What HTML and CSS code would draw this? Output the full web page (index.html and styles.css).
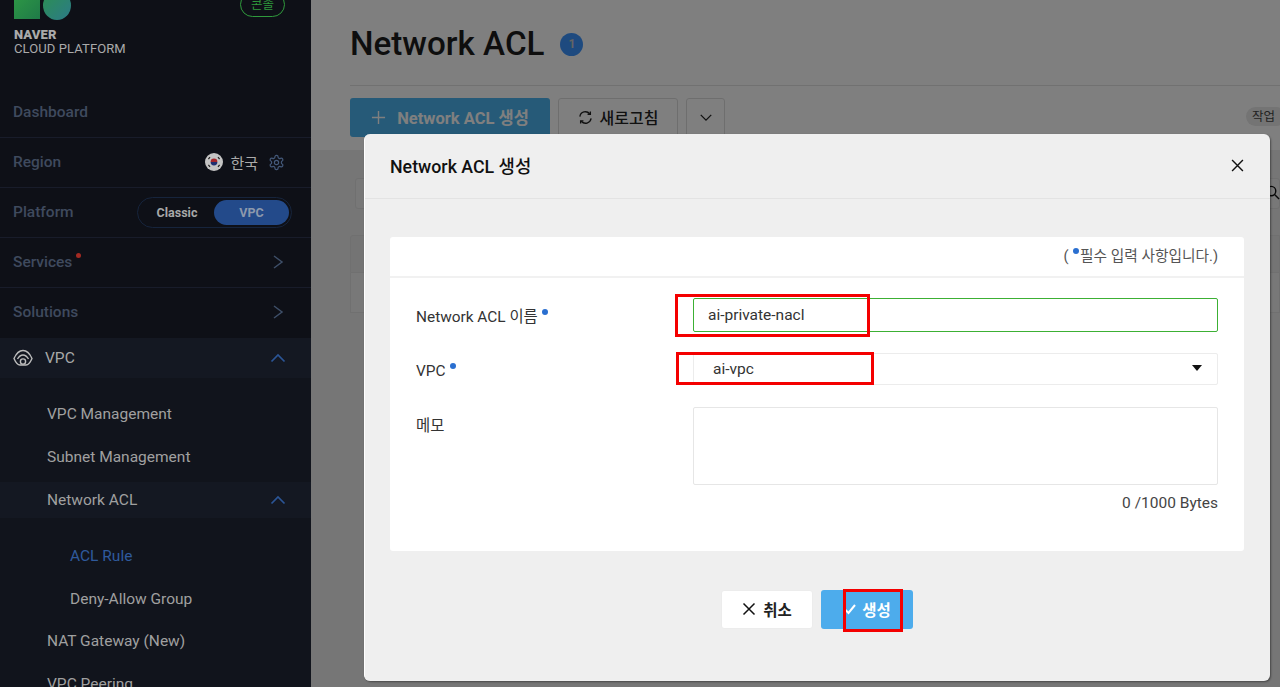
FILE: index.html
```html
<!DOCTYPE html>
<html lang="ko">
<head>
    <meta charset="UTF-8">
    <meta name="viewport" content="width=device-width, initial-scale=1.0">
    <title>Network ACL</title>
    <link rel="stylesheet" href="styles.css">
</head>
<body>
    <aside class="sidebar">
        <div class="brand">
            <div class="brand-top">
                <div class="logo">
                    <span class="logo-square"></span>
                    <span class="logo-circle"></span>
                </div>
                <span class="console-pill">콘솔</span>
            </div>
            <div class="brand-name"><b>NAVER</b><br>CLOUD PLATFORM</div>
        </div>

        <div class="nav-row"><span class="nav-title">Dashboard</span></div>
        <div class="nav-row">
            <span class="nav-title">Region</span>
            <div class="region">
                <svg class="flag" viewBox="0 0 18 18">
                    <circle cx="9" cy="9" r="9" fill="#c4c4c4"/>
                    <path d="M5.6 9a3.4 3.4 0 0 1 6.8 0z" fill="#a5262b"/>
                    <path d="M5.6 9a3.4 3.4 0 0 0 6.8 0z" fill="#1f2f70"/>
                    <path d="M3.4 6.2l1.6-2M13 4.2l1.6 2M3.4 11.8l1.6 2M13 13.8l1.6-2" stroke="#222" stroke-width="1.2"/>
                </svg>
                <span class="region-name">한국</span>
                <svg class="gear" viewBox="0 0 24 24" fill="none" stroke="#44597a" stroke-width="1.7">
                    <path d="M12.22 2h-.44a2 2 0 0 0-2 2v.18a2 2 0 0 1-1 1.73l-.43.25a2 2 0 0 1-2 0l-.15-.08a2 2 0 0 0-2.73.73l-.22.38a2 2 0 0 0 .73 2.73l.15.1a2 2 0 0 1 1 1.72v.51a2 2 0 0 1-1 1.74l-.15.09a2 2 0 0 0-.73 2.73l.22.38a2 2 0 0 0 2.73.73l.15-.08a2 2 0 0 1 2 0l.43.25a2 2 0 0 1 1 1.73V20a2 2 0 0 0 2 2h.44a2 2 0 0 0 2-2v-.18a2 2 0 0 1 1-1.73l.43-.25a2 2 0 0 1 2 0l.15.08a2 2 0 0 0 2.73-.73l.22-.39a2 2 0 0 0-.73-2.73l-.15-.08a2 2 0 0 1-1-1.74v-.5a2 2 0 0 1 1-1.74l.15-.09a2 2 0 0 0 .73-2.73l-.22-.38a2 2 0 0 0-2.73-.73l-.15.08a2 2 0 0 1-2 0l-.43-.25a2 2 0 0 1-1-1.73V4a2 2 0 0 0-2-2z"/>
                    <circle cx="12" cy="12" r="3"/>
                </svg>
            </div>
        </div>
        <div class="nav-row">
            <span class="nav-title">Platform</span>
            <div class="platform-switch">
                <span class="switch-item">Classic</span>
                <span class="switch-item switch-on">VPC</span>
            </div>
        </div>
        <div class="nav-row">
            <span class="nav-title">Services<i class="red-dot"></i></span>
            <svg class="chev" viewBox="0 0 12 16"><path d="M2 2l8 6-8 6"/></svg>
        </div>
        <div class="nav-row nav-row-last">
            <span class="nav-title">Solutions</span>
            <svg class="chev" viewBox="0 0 12 16"><path d="M2 2l8 6-8 6"/></svg>
        </div>

        <div class="vpc-row">
            <svg class="vpc-icon" viewBox="0 0 20 18" fill="none" stroke="#bdbdbd" stroke-width="1.4">
                <path d="M1 9.5C3 5 6 1.5 10 1.5s7 3.500 9 8c-1.500 3.500-4 6.500-6 6.500H7c-2 0-4.500-3-6-6.500z"/>
                <path d="M4.500 10C6 7.500 8 6 10 6s4 1.500 5.500 4"/>
                <circle cx="10" cy="12.500" r="2.600"/>
            </svg>
            <span class="vpc-name">VPC</span>
            <svg class="chev-up" viewBox="0 0 16 10"><path d="M1.500 8.500L8 2l6.500 6.500"/></svg>
        </div>

        <div class="sub-menu">
            <div class="sub-item">VPC Management</div>
            <div class="sub-item">Subnet Management</div>
            <div class="sub-item sub-open">
                <span>Network ACL</span>
                <svg class="chev-up" viewBox="0 0 16 10"><path d="M1.500 8.500L8 2l6.500 6.500"/></svg>
            </div>
            <div class="third-menu">
                <div class="third-item third-active">ACL Rule</div>
                <div class="third-item">Deny-Allow Group</div>
            </div>
            <div class="sub-item">NAT Gateway (New)</div>
            <div class="sub-item">VPC Peering</div>
        </div>
    </aside>

    <main class="content">
        <section class="page-head">
            <div class="title-row">
                <h1>Network ACL</h1>
                <span class="count-badge">1</span>
            </div>
            <div class="toolbar">
                <button class="btn-primary" type="button">
                    <svg class="icon-plus" viewBox="0 0 16 16"><path d="M8 1v14M1 8h14"/></svg>
                    Network ACL 생성
                </button>
                <button class="btn-plain" type="button">
                    <svg class="icon-refresh" viewBox="0 0 16 16"><path d="M2 7a6 6 0 0 1 10.500-3M14 9a6 6 0 0 1-10.500 3"/><path d="M13.200 1.500v3h-3M2.800 14.500v-3h3"/></svg>
                    새로고침
                </button>
                <button class="btn-more" type="button">
                    <svg class="icon-down" viewBox="0 0 16 10"><path d="M2 2l6 6 6-6"/></svg>
                </button>
                <span class="job-pill">작업</span>
            </div>
        </section>

        <section class="page-body">
            <div class="search-box">
                <svg class="icon-search" viewBox="0 0 16 16"><circle cx="6.500" cy="6.500" r="5"/><path d="M10.500 10.500L15 15"/></svg>
            </div>
            <div class="table-head"></div>
            <div class="table-row"></div>
        </section>

        <div class="overlay"></div>

        <div class="modal">
            <div class="modal-head">
                <h2>Network ACL 생성</h2>
                <svg class="icon-close" viewBox="0 0 12 12"><path d="M1 1l10 10M11 1L1 11"/></svg>
            </div>
            <div class="modal-body">
                <div class="panel">
                    <div class="panel-note">( <i class="req-dot"></i>필수 입력 사항입니다.)</div>
                    <div class="panel-form">
                        <div class="form-row">
                            <label class="form-label">Network ACL 이름<i class="req-dot"></i></label>
                            <div class="text-input">ai-private-nacl</div>
                        </div>
                        <div class="form-row form-row-select">
                            <label class="form-label">VPC<i class="req-dot"></i></label>
                            <div class="select-input">ai-vpc<span class="caret"></span></div>
                        </div>
                        <div class="form-row">
                            <label class="form-label">메모</label>
                            <div class="memo-input"></div>
                        </div>
                        <div class="memo-count">0 /1000 Bytes</div>
                    </div>
                </div>
                <div class="modal-actions">
                    <button class="btn-cancel" type="button">
                        <svg class="icon-x" viewBox="0 0 14 14"><path d="M1.500 1.500l11 11M12.500 1.500l-11 11"/></svg>
                        취소
                    </button>
                    <button class="btn-create" type="button">
                        <svg class="icon-check" viewBox="0 0 14 12"><path d="M2 6.500l3.500 3.500L12 2"/></svg>
                        생성
                    </button>
                </div>
            </div>
            <!-- 스크린샷 위에 표시된 빨간 박스 -->
            <span class="mark mark-name"></span>
            <span class="mark mark-vpc"></span>
            <span class="mark mark-create"></span>
        </div>
    </main>
</body>
</html>
```

FILE: styles.css
```css
* {
    box-sizing: border-box;
}

html, body {
    height: 100%;
}

body {
    margin: 0;
    display: flex;
    overflow: hidden;
    font-family: Roboto, "Noto Sans CJK KR", sans-serif;
    color: #222;
}

button {
    font-family: inherit;
}

/* sidebar */
.sidebar {
    flex: 0 0 311px;
    height: 687px;
    overflow: hidden;
    background: #0e1017;
}

.brand {
    height: 88px;
    padding-left: 14px;
    overflow: hidden;
}

.brand-top {
    display: flex;
    justify-content: space-between;
    height: 28px;
    padding-right: 26px;
}

.logo {
    display: flex;
    gap: 3px;
    margin-top: -9px;
}

.logo-square {
    width: 26px;
    height: 28px;
    background: linear-gradient(135deg, #2f9a45, #1f7a48);
}

.logo-circle {
    width: 28px;
    height: 29px;
    border-radius: 50%;
    background: linear-gradient(135deg, #2c9050, #2c7a88);
}

.console-pill {
    width: 45px;
    height: 25px;
    margin-top: -8px;
    border: 1px solid #2f9a3c;
    border-radius: 13px;
    color: #2f9a3c;
    font-size: 12.500px;
    line-height: 24px;
    text-align: center;
}

.brand-name {
    color: #aaa;
    font-size: 13px;
    line-height: 14px;
    letter-spacing: 0.1px;
}

.brand-name b {
    font-weight: 900;
}

.nav-row {
    display: flex;
    justify-content: space-between;
    align-items: center;
    height: 50px;
    padding: 0 26px 1px 13px;
    border-bottom: 1px solid #181c2a;
}

.nav-row-last {
    padding-bottom: 2px;
    border-bottom: none;
}

.nav-title {
    position: relative;
    color: #3f4a5e;
    font-size: 15.500px;
    font-weight: 500;
}

.red-dot {
    position: absolute;
    top: 0;
    right: -9px;
    width: 5px;
    height: 5px;
    border-radius: 50%;
    background: #a32a22;
}

.region {
    display: flex;
    align-items: center;
}

.flag {
    width: 18px;
    height: 18px;
    margin-right: 7px;
}

.region-name {
    margin-right: 10px;
    color: #aaa;
    font-size: 15px;
}

.gear {
    width: 17px;
    height: 17px;
}

.platform-switch {
    display: flex;
    align-items: center;
    width: 155px;
    height: 31px;
    margin-right: -7px;
    padding: 2px;
    border: 1px solid #16243c;
    border-radius: 16px;
}

.switch-item {
    flex: 1;
    color: #a8a8a8;
    font-size: 12.500px;
    font-weight: 700;
    text-align: center;
}

.switch-on {
    flex: 0 0 75px;
    height: 25px;
    border-radius: 13px;
    background: #234a8a;
    color: #8d99ad;
    line-height: 25px;
}

.chev {
    width: 12px;
    height: 16px;
    margin-right: 1px;
    fill: none;
    stroke: #3e4f68;
    stroke-width: 1.500;
}

.chev-up {
    width: 16px;
    height: 10px;
    fill: none;
    stroke: #2b5596;
    stroke-width: 1.700;
}

.vpc-row {
    display: flex;
    align-items: center;
    height: 40px;
    padding: 0 25px 0 13px;
    background: #141822;
}

.vpc-icon {
    width: 20px;
    height: 18px;
    margin-right: 12px;
}

.vpc-name {
    flex: 1;
    color: #a8a8a8;
    font-size: 15.500px;
}

.sub-menu {
    padding-top: 14px;
    background: #11141c;
}

.sub-item {
    display: flex;
    justify-content: space-between;
    align-items: center;
    height: 43px;
    padding: 0 25px 0 47px;
    color: #a0a0a0;
    font-size: 15.500px;
}

.sub-open {
    height: 36px;
    margin-top: 4px;
    background: #141822;
}

.third-menu {
    margin-bottom: -2px;
    padding: 17px 0 0 70px;
}

.third-item {
    height: 43px;
    color: #a0a0a0;
    font-size: 15.500px;
    line-height: 43px;
}

.third-active {
    color: #2f5a9c;
}

/* main page */
.content {
    position: relative;
    flex: 1;
    height: 687px;
    overflow: hidden;
    background: #ececec;
}

.page-head {
    height: 150px;
    padding: 0 0 0 39px;
    background: #fff;
}

.title-row {
    display: flex;
    align-items: center;
    height: 86px;
    border-bottom: 1px solid #e2e2e2;
}

h1 {
    margin: 2px 16px 0 0;
    color: #1c1c1c;
    font-size: 33.200px;
    font-weight: 500;
}

.count-badge {
    width: 23px;
    height: 23px;
    margin-top: 3px;
    border-radius: 50%;
    background: #3c94ff;
    color: #c8c8c8;
    font-size: 12px;
    font-weight: 700;
    line-height: 23px;
    text-align: center;
}

.toolbar {
    display: flex;
    align-items: flex-start;
    gap: 8px;
    margin-top: 12px;
}

.toolbar button {
    display: flex;
    justify-content: center;
    align-items: center;
    height: 39px;
    padding-bottom: 2px;
    border-radius: 3px;
    font-size: 16px;
    font-weight: 500;
}

.toolbar .btn-primary {
    width: 200px;
    border: none;
    background: #4cb4f0;
    color: #fff;
    font-size: 16.500px;
    font-weight: 700;
}

.btn-plain {
    width: 120px;
    border: 1px solid #ddd;
    background: #fff;
    color: #222;
}

.btn-more {
    width: 39px;
    border: 1px solid #ddd;
    background: #fff;
}

.icon-plus {
    width: 15px;
    height: 15px;
    margin-right: 11px;
    stroke: #fff;
    stroke-width: 1.500;
}

.icon-refresh {
    width: 15px;
    height: 15px;
    margin-right: 7px;
    fill: none;
    stroke: #222;
    stroke-width: 1.400;
}

.icon-down {
    width: 14px;
    height: 9px;
    fill: none;
    stroke: #222;
    stroke-width: 1.500;
}

.job-pill {
    width: 40px;
    height: 19px;
    margin: 9px -6px 0 auto;
    padding-left: 6px;
    border-radius: 10px;
    background: #e8e8e8;
    color: #444;
    font-size: 12.500px;
    line-height: 19px;
    white-space: nowrap;
}

.page-body {
    position: relative;
    padding: 28px 0 0 39px;
}

.search-box {
    height: 31px;
    margin-left: 5px;
    border: 1px solid #e0e0e0;
    border-radius: 3px;
    background: #f0f0f0;
}

.icon-search {
    position: absolute;
    top: 35px;
    right: 0;
    width: 15px;
    height: 15px;
    fill: none;
    stroke: #111;
    stroke-width: 1.500;
}

.table-head {
    height: 38px;
    margin-top: 26px;
    border: 1px solid #e0e0e0;
    border-radius: 3px 0 0 0;
    background: #e8e8e8;
}

.table-row {
    height: 40px;
    border: 1px solid #e0e0e0;
    border-top: none;
    background: #f0f0f0;
}

.overlay {
    position: absolute;
    inset: 0;
    background: rgba(0, 0, 0, 0.5);
}

/* modal */
.modal {
    position: absolute;
    top: 134px;
    left: 53px;
    width: 906px;
    height: 547px;
    border-left: 1px solid #fff;
    border-radius: 6px;
    background: #efefef;
    box-shadow: 1px 1px 2px rgba(0, 0, 0, 0.4);
}

.modal-head {
    display: flex;
    justify-content: space-between;
    align-items: center;
    height: 65px;
    padding: 0 26px 2px 25px;
    border-bottom: 1px solid #e3e3e3;
}

h2 {
    margin: 0;
    color: #111;
    font-size: 17.800px;
    font-weight: 500;
}

.icon-close {
    width: 13px;
    height: 13px;
    stroke: #111;
    stroke-width: 1.300;
}

.modal-body {
    padding: 38px 26px 0 25px;
}

.panel {
    border-radius: 3px;
    background: #fff;
}

.panel-note {
    height: 41px;
    padding-right: 26px;
    border-bottom: 2px solid #f1f1f1;
    color: #555;
    font-size: 14.700px;
    line-height: 38px;
    text-align: right;
}

.req-dot {
    display: inline-block;
    width: 6px;
    height: 6px;
    margin: 0 1px 0 1px;
    border-radius: 50%;
    background: #2a6fd0;
    vertical-align: 7px;
}

.form-label .req-dot {
    margin-left: 4px;
}

.panel-form {
    height: 273px;
    padding: 20px 26px 0;
}

.form-row {
    display: flex;
    margin-bottom: 21px;
}

.form-row-select {
    margin-bottom: 22px;
}

.form-label {
    flex: 0 0 277px;
    padding-top: 9px;
    color: #333;
    font-size: 15.400px;
    line-height: 20px;
}

.form-row-select .form-label {
    padding-top: 8px;
}

.text-input {
    flex: 1;
    height: 34px;
    padding-left: 14px;
    border: 1px solid #3cb034;
    border-radius: 2px;
    color: #333;
    font-size: 15.500px;
    line-height: 33px;
}

.select-input {
    position: relative;
    flex: 1;
    height: 32px;
    padding-left: 19px;
    border: 1px solid #ececec;
    border-radius: 2px;
    color: #333;
    font-size: 15.500px;
    line-height: 30px;
}

.caret {
    position: absolute;
    top: 11px;
    right: 15px;
    border-top: 6px solid #111;
    border-right: 5px solid transparent;
    border-left: 5px solid transparent;
}

.memo-input {
    flex: 1;
    height: 78px;
    border: 1px solid #e6e6e6;
    border-radius: 2px;
}

.memo-count {
    margin-top: -12px;
    color: #444;
    font-size: 15.500px;
    text-align: right;
}

.modal-actions {
    display: flex;
    justify-content: center;
    gap: 8px;
    margin-top: 39px;
}

.modal-actions button {
    display: flex;
    justify-content: center;
    align-items: center;
    width: 92px;
    height: 39px;
    padding-bottom: 2px;
    border-radius: 3px;
    font-size: 15.500px;
    font-weight: 700;
}

.btn-cancel {
    border: 1px solid #ececec;
    background: #fff;
    color: #222;
}

.btn-create {
    border: none;
    background: #4dacec;
    color: #fff;
}

.icon-x {
    width: 14px;
    height: 14px;
    margin-right: 7px;
    stroke: #111;
    stroke-width: 1.500;
}

.icon-check {
    width: 14px;
    height: 12px;
    margin-right: 5px;
    fill: none;
    stroke: #fff;
    stroke-width: 2;
}

/* red boxes */
.mark {
    position: absolute;
    border: 3px solid #f40000;
}

.mark-name {
    top: 160px;
    left: 310px;
    width: 195px;
    height: 43px;
}

.mark-vpc {
    top: 218px;
    left: 311px;
    width: 198px;
    height: 33px;
}

.mark-create {
    top: 455px;
    left: 478px;
    width: 60px;
    height: 43px;
}
```
